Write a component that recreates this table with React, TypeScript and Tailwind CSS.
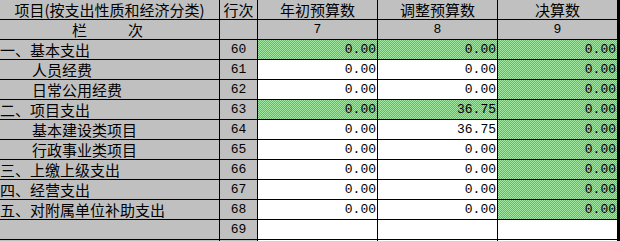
import React from "react";

type Row = {
  label: string;
  indent: boolean;
  no: string;
  vals: string[];
  green: boolean[];
};

const rows: Row[] = [
  { label: "一、基本支出", indent: false, no: "60", vals: ["0.00", "0.00", "0.00"], green: [true, true, true] },
  { label: "人员经费", indent: true, no: "61", vals: ["0.00", "0.00", "0.00"], green: [false, false, true] },
  { label: "日常公用经费", indent: true, no: "62", vals: ["0.00", "0.00", "0.00"], green: [false, false, true] },
  { label: "二、项目支出", indent: false, no: "63", vals: ["0.00", "36.75", "0.00"], green: [true, true, true] },
  { label: "基本建设类项目", indent: true, no: "64", vals: ["0.00", "36.75", "0.00"], green: [false, false, true] },
  { label: "行政事业类项目", indent: true, no: "65", vals: ["0.00", "0.00", "0.00"], green: [false, false, true] },
  { label: "三、上缴上级支出", indent: false, no: "66", vals: ["0.00", "0.00", "0.00"], green: [false, false, true] },
  { label: "四、经营支出", indent: false, no: "67", vals: ["0.00", "0.00", "0.00"], green: [false, false, true] },
  { label: "五、对附属单位补助支出", indent: false, no: "68", vals: ["0.00", "0.00", "0.00"], green: [false, false, true] },
  { label: "", indent: false, no: "69", vals: ["", "", ""], green: [false, false, false] },
];

const cjk = "font-['Noto_Sans_CJK_SC',sans-serif] text-[15px] leading-[19px]";
const mono = "font-['Liberation_Mono',monospace] text-[13px] leading-[19px]";
const cell = "h-[20px] border-r border-b border-black flex items-center overflow-hidden whitespace-nowrap";
const gray = "bg-[#c0c0c0]";
const green =
  "bg-[conic-gradient(#52c852_25%,#a2e8a2_0_50%,#52c852_0_75%,#a2e8a2_0)] bg-[length:2px_2px]";

export default function App() {
  return (
    <div className="w-[620px] h-[241px] overflow-hidden bg-white text-black">
      <div className="w-[620px] grid grid-cols-[220px_38px_120px_120px_120px] border-r-2 border-black box-border">
        {/* header row */}
        <div className={`${cell} ${gray} ${cjk} justify-center`}>项目(按支出性质和经济分类)</div>
        <div className={`${cell} ${gray} ${cjk} justify-center`}>行次</div>
        <div className={`${cell} ${gray} ${cjk} justify-center`}>年初预算数</div>
        <div className={`${cell} ${gray} ${cjk} justify-center`}>调整预算数</div>
        <div className={`${cell} ${gray} ${cjk} justify-center`}>决算数</div>

        {/* 栏次 row */}
        <div className={`${cell} ${gray} ${cjk} justify-center gap-[41px] pr-[4px]`}>
          <span>栏</span>
          <span>次</span>
        </div>
        <div className={`${cell} ${gray}`}></div>
        <div className={`${cell} ${gray} ${mono} justify-center`}>7</div>
        <div className={`${cell} ${gray} ${mono} justify-center`}>8</div>
        <div className={`${cell} ${gray} ${mono} justify-center`}>9</div>

        {rows.map((r) => (
          <React.Fragment key={r.no}>
            <div className={`${cell} ${gray} ${cjk} ${r.indent ? "pl-[32px]" : "pl-0"}`}>{r.label}</div>
            <div className={`${cell} ${gray} ${mono} justify-center`}>{r.no}</div>
            {r.vals.map((v, i) => (
              <div
                key={i}
                className={`${cell} ${r.green[i] ? green : "bg-white"} ${mono} justify-end pr-[1px]`}
              >
                {v}
              </div>
            ))}
          </React.Fragment>
        ))}

        {/* partial next row */}
        <div className={`${cell} ${gray}`}></div>
        <div className={`${cell} ${gray}`}></div>
        <div className={`${cell} bg-white`}></div>
        <div className={`${cell} bg-white`}></div>
        <div className={`${cell} bg-white`}></div>
      </div>
    </div>
  );
}
